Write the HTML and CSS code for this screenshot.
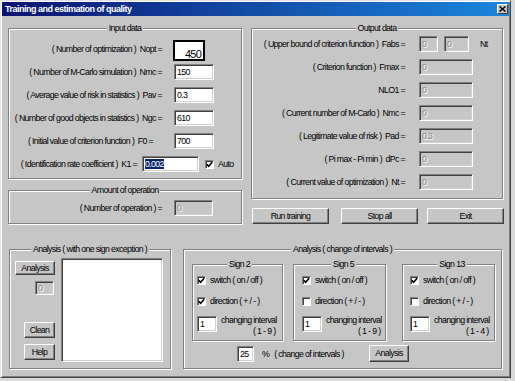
FILE: index.html
```html
<!DOCTYPE html>
<html>
<head>
<meta charset="utf-8">
<title>Training and estimation of quality</title>
<link rel="stylesheet" href="styles.css">
</head>
<body>
<div class="window">
  <div class="titlebar">
    <span class="title">Training and estimation of quality</span>
    <span class="close"><svg width="7" height="6" viewBox="0 0 7 6"><path d="M0.5 0.5L6.5 5.5M6.5 0.5L0.5 5.5" stroke="#000" stroke-width="1.5"/></svg></span>
  </div>
  <div class="client">
    <div class="top">
      <div class="lcol">
        <div class="grp g-input">
          <div class="gt">Input data</div>
          <div class="row r-first"><span class="lbl">( Number of optimization )&nbsp; Nopt =</span><div class="edit big">450</div></div>
          <div class="row"><span class="lbl">( Number of M-Carlo simulation )&nbsp; Nmc =</span><div class="edit e40">150</div></div>
          <div class="row"><span class="lbl">( Average value of risk in statistics )&nbsp; Pav =</span><div class="edit e40">0.3</div></div>
          <div class="row"><span class="lbl">( Number of good objects in statistics )&nbsp; Ngc =</span><div class="edit e40">610</div></div>
          <div class="row"><span class="lbl lbl-f0">( Initial value of criterion function )&nbsp; F0 =</span><div class="edit e40">700</div></div>
          <div class="row"><span class="lbl lbl-k1">( Identification rate coefficient )&nbsp; K1 =</span><div class="edit ek1"><span class="sel">0.002</span></div><span class="cb cb-auto"><svg width="7" height="7" viewBox="0 0 7 7"><path d="M0.8 3.2L2.6 5.2L6.2 1.2" fill="none" stroke="#000" stroke-width="1.6"/></svg></span><span class="cbl">Auto</span></div>
        </div>
        <div class="grp g-amount">
          <div class="gt">Amount of operation</div>
          <div class="row r-amount"><span class="lbl">( Number of operation ) =</span><div class="edit dis e-amount">0</div></div>
        </div>
      </div>
      <div class="rcol">
        <div class="grp g-output">
          <div class="gt">Output data</div>
          <div class="row r-ofirst"><span class="lbl">( Upper bound of criterion function )&nbsp; Fabs =</span><div class="edit dis e-fabs1">0</div><div class="edit dis e-fabs2">0</div><span class="nt">Nt</span></div>
          <div class="row"><span class="lbl">( Criterion function )&nbsp; Fmax =</span><div class="edit dis e-out">0</div></div>
          <div class="row"><span class="lbl">NLO1 =</span><div class="edit dis e-out">0</div></div>
          <div class="row"><span class="lbl">( Current number of M-Carlo )&nbsp; Nmc =</span><div class="edit dis e-out">0</div></div>
          <div class="row"><span class="lbl">( Legitimate value of risk )&nbsp; Pad =</span><div class="edit dis e-out">0.3</div></div>
          <div class="row"><span class="lbl">( Pi max - Pi min )&nbsp; dPc =</span><div class="edit dis e-out">0</div></div>
          <div class="row"><span class="lbl">( Current value of optimization )&nbsp; Nt =</span><div class="edit dis e-out">0</div></div>
        </div>
        <div class="btnrow">
          <div class="btn b-run">Run training</div>
          <div class="btn b-stop">Stop all</div>
          <div class="btn b-exit">Exit</div>
        </div>
      </div>
    </div>
    <div class="bottom">
      <div class="grp g-an1">
        <div class="gt">Analysis ( with one sign exception )</div>
        <div class="an1-body">
          <div class="an1-left">
            <div class="btn b-an1">Analysis</div>
            <div class="edit dis e-an1">0</div>
            <div class="btn b-small b-clean">Clean</div>
            <div class="btn b-small b-help">Help</div>
          </div>
          <div class="listbox"></div>
        </div>
      </div>
      <div class="grp g-an2">
        <div class="gt">Analysis ( change of intervals )</div>
        <div class="signs">
          <div class="grp sign s2">
            <div class="gt">Sign 2</div>
            <div class="cbrow cbrow1"><span class="cb"><svg width="7" height="7" viewBox="0 0 7 7"><path d="M0.8 3.2L2.6 5.2L6.2 1.2" fill="none" stroke="#000" stroke-width="1.6"/></svg></span><span class="cbl">switch ( on / off )</span></div>
            <div class="cbrow cbrow2"><span class="cb"><svg width="7" height="7" viewBox="0 0 7 7"><path d="M0.8 3.2L2.6 5.2L6.2 1.2" fill="none" stroke="#000" stroke-width="1.6"/></svg></span><span class="cbl">direction ( + / - )</span></div>
            <div class="introw"><div class="edit e-int">1</div><div class="inttxt"><div>changing interval</div><div class="rng">( 1 - 9 )</div></div></div>
          </div>
          <div class="grp sign s5">
            <div class="gt">Sign 5</div>
            <div class="cbrow cbrow1"><span class="cb"><svg width="7" height="7" viewBox="0 0 7 7"><path d="M0.8 3.2L2.6 5.2L6.2 1.2" fill="none" stroke="#000" stroke-width="1.6"/></svg></span><span class="cbl">switch ( on / off )</span></div>
            <div class="cbrow cbrow2"><span class="cb"></span><span class="cbl">direction ( + / - )</span></div>
            <div class="introw"><div class="edit e-int">1</div><div class="inttxt"><div>changing interval</div><div class="rng">( 1 - 9 )</div></div></div>
          </div>
          <div class="grp sign s13">
            <div class="gt">Sign 13</div>
            <div class="cbrow cbrow1"><span class="cb"><svg width="7" height="7" viewBox="0 0 7 7"><path d="M0.8 3.2L2.6 5.2L6.2 1.2" fill="none" stroke="#000" stroke-width="1.6"/></svg></span><span class="cbl">switch ( on / off )</span></div>
            <div class="cbrow cbrow2"><span class="cb"></span><span class="cbl">direction ( + / - )</span></div>
            <div class="introw"><div class="edit e-int">1</div><div class="inttxt"><div>changing interval</div><div class="rng">( 1 - 4 )</div></div></div>
          </div>
        </div>
        <div class="pctrow">
          <div class="edit e-pct">25</div>
          <span class="pct">%</span>
          <span class="pcttxt">( change of intervals )</span>
          <div class="btn b-an2">Analysis</div>
        </div>
      </div>
    </div>
  </div>
</div>
</body>
</html>
```

FILE: styles.css
```css
* { box-sizing: border-box; }
html, body { margin: 0; padding: 0; }
body {
  width: 515px;
  height: 381px;
  overflow: hidden;
  background: #d8d8d8;
  font-family: "Liberation Sans", Arial, sans-serif;
  font-size: 8.8px;
  letter-spacing: -0.65px;
  color: #000;
}
.window {
  width: 511px;
  height: 378px;
  background: #c6c6c6;
  border: 1px solid;
  border-color: #e4e4e4 #404040 #404040 #e4e4e4;
  box-shadow: inset 1px 1px #fff, inset -1px -1px #808080;
  padding: 1px;
}
.titlebar {
  height: 14px;
  display: flex;
  align-items: center;
  padding-left: 3px;
  background: linear-gradient(to right, #0a1470, #1a86dc);
}
.title {
  color: #fff;
  font-weight: bold;
  font-size: 9px;
  letter-spacing: -0.5px;
  white-space: nowrap;
}
.close {
  margin-left: auto;
  margin-right: 1px;
  width: 11px;
  height: 10px;
  background: #c6c6c6;
  border: 1px solid;
  border-color: #fff #404040 #404040 #fff;
  display: flex;
  align-items: center;
  justify-content: center;
}
.close svg { display: block; }
.client { padding: 12px 0 0 6px; }
.top { display: flex; height: 196px; }
.lcol { width: 234px; }
.rcol { width: 252px; margin-left: 9px; }

.grp {
  border: 1px solid #808080;
  box-shadow: inset 1px 1px #fff, 1px 1px #fff;
}
.gt {
  display: table;
  margin: -7px auto 0;
  padding: 0 2px;
  line-height: 12px;
  background: #c6c6c6;
  white-space: nowrap;
}
.row {
  display: flex;
  align-items: center;
  height: 16px;
  margin-top: 7px;
  white-space: nowrap;
}
.lbl {
  width: 153px;
  text-align: right;
  flex: none;
}
.edit {
  flex: none;
  height: 16px;
  background: #fff;
  border: 1px solid;
  border-color: #808080 #fff #fff #808080;
  box-shadow: inset 1px 1px #404040, inset -1px -1px #d4d0c8;
  padding: 0 2px;
  line-height: 14px;
  white-space: nowrap;
}
.edit.dis {
  background: #c6c6c6;
  color: #8c8c8c;
  text-shadow: 1px 1px #fff;
}
.g-input { height: 151px; }
.g-input .r-first { margin-top: 7px; }
.big {
  align-self: flex-start;
  margin-top: -1px;
  margin-left: 11px;
  width: 32px;
  height: 21px;
  border: 2px solid #000;
  box-shadow: none;
  font-size: 11px;
  letter-spacing: -0.8px;
  line-height: 14px;
  padding: 5px 0 0 10px;
}
.e40 { width: 40px; margin-left: 12px; }
.lbl-f0 { padding-right: 9px; }
.lbl-k1 { width: 128px; }
.ek1 { width: 57px; margin-left: 5px; }
.sel { background: #0a246a; color: #fff; }
.cb {
  flex: none;
  display: block;
  width: 9px;
  height: 9px;
  background: #fff;
  border: 1px solid;
  border-color: #808080 #fff #fff #808080;
  box-shadow: inset 1px 1px #404040;
}
.cb svg { display: block; }
.cb-auto { margin-left: 6px; }
.cbl { margin-left: 4px; white-space: nowrap; }

.g-amount { height: 34px; margin-top: 11px; }
.r-amount { margin-top: 4px; }
.e-amount { width: 39px; margin-left: 12px; }

.g-output { height: 171px; }
.g-output .r-ofirst { margin-top: 2px; }
.e-out { width: 54px; margin-left: 14px; }
.e-fabs1 { width: 19px; margin-left: 14px; }
.e-fabs2 { width: 25px; margin-left: 6px; }
.nt { margin-left: 11px; }

.btn {
  flex: none;
  background: #c6c6c6;
  border: 1px solid;
  border-color: #fff #404040 #404040 #fff;
  box-shadow: inset -1px -1px #808080;
  text-align: center;
  white-space: nowrap;
}
.btnrow { display: flex; margin-top: 9px; }
.btnrow .btn { width: 77px; height: 16px; line-height: 14px; }
.b-run { margin-left: 1px; }
.b-stop { margin-left: 12px; }
.b-exit { margin-left: 9px; }

.bottom { display: flex; margin-top: 25px; }
.g-an1 { width: 162px; height: 120px; margin-left: 1px; }
.an1-body { display: flex; margin-top: 3px; padding-left: 5px; }
.an1-left { width: 40px; display: flex; flex-direction: column; align-items: flex-end; }
.b-an1 { width: 40px; height: 14px; line-height: 12px; margin-top: 3px; }
.e-an1 { width: 19px; height: 14px; line-height: 12px; margin-top: 6px; margin-right: 1px; }
.b-small { width: 31px; height: 16px; line-height: 14px; }
.b-clean { margin-top: 27px; }
.b-help { margin-top: 6px; }
.listbox {
  margin-left: 6px;
  width: 102px;
  height: 104px;
  background: #fff;
  border: 1px solid;
  border-color: #808080 #fff #fff #808080;
  box-shadow: inset 1px 1px #404040, inset -1px -1px #d4d0c8;
}

.g-an2 { width: 319px; height: 120px; margin-left: 12px; }
.signs { display: flex; margin-top: 9px; }
.sign { height: 77px; }
.s2 { width: 91px; margin-left: 8px; padding-left: 4px; }
.s5 { width: 93px; margin-left: 10px; padding-left: 8px; }
.s13 { width: 93px; margin-left: 16px; padding-left: 7px; }
.cbrow { display: flex; align-items: center; height: 10px; }
.cbrow1 { margin-top: 5px; }
.cbrow2 { margin-top: 11px; }
.introw { display: flex; align-items: flex-start; margin-top: 10px; }
.e-int { width: 20px; }
.inttxt { margin-left: 4px; margin-top: -1px; line-height: 11px; white-space: nowrap; }
.rng { text-align: right; padding-right: 1px; }

.pctrow { display: flex; align-items: center; margin-top: 4px; }
.e-pct { width: 17px; margin-left: 53px; }
.pct { margin-left: 8px; }
.pcttxt { margin-left: 5px; }
.b-an2 { width: 40px; height: 17px; line-height: 15px; margin-left: auto; margin-right: 92px; }
```
